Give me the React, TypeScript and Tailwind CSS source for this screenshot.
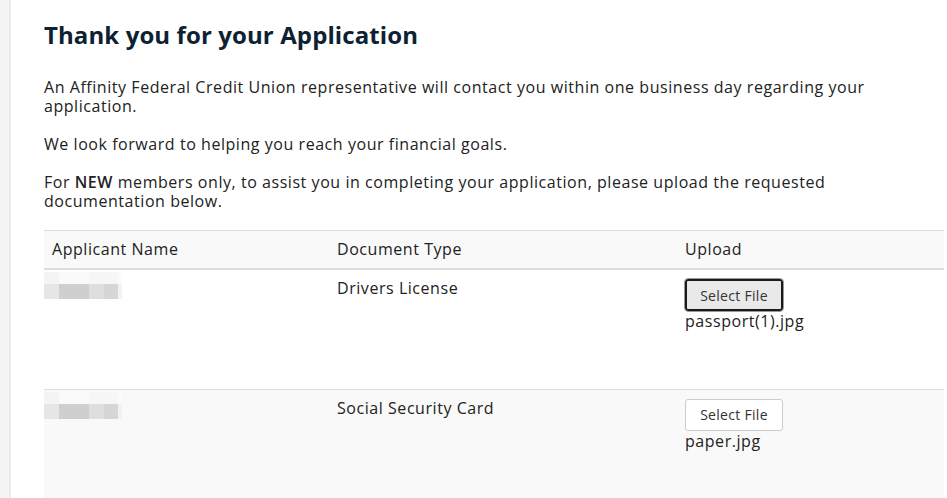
import React from "react";

// pixelated placeholder standing in for the redacted applicant name
function BlurredName() {
  const top = ["#f4f4f4", "#fafafa", "#f6f6f6", "#f7f7f7", "#fbfbfb"];
  const bottom = ["#e6e6e6", "#cfcfcf", "#dedede", "#d6d6d6", "#f2f2f2"];
  const widths = ["w-[15px]", "w-[30px]", "w-[15px]", "w-[14px]", "w-[4px]"];
  return (
    <div className="flex flex-col">
      <div className="flex h-[12px]">
        {top.map((c, i) => (
          <div key={i} className={widths[i]} style={{ background: c }} />
        ))}
      </div>
      <div className="flex h-[15px]">
        {bottom.map((c, i) => (
          <div key={i} className={widths[i]} style={{ background: c }} />
        ))}
      </div>
    </div>
  );
}

const rows = [
  { doc: "Drivers License", file: "passport(1).jpg", focused: true },
  { doc: "Social Security Card", file: "paper.jpg", focused: false },
];

export default function App() {
  return (
    <div
      className="flex min-h-[498px] bg-white text-[#222]"
      style={{ fontFamily: '"Open Sans", "Liberation Sans", sans-serif' }}
    >
      <div className="w-[11px] shrink-0 border-r-2 border-[#ebebeb] bg-[#f4f4f4]" />
      <main className="flex-1 pl-[33px] pr-[3px] pt-[19px]">
        <h1 className="text-[24px] font-bold leading-[32px] tracking-[0.1px] text-[#0c2233]">
          Thank you for your Application
        </h1>
        <div className="mt-[27px] space-y-[19px] text-[16px] leading-[19px] tracking-[0.55px]">
          <p className="pr-[40px]">
            An Affinity Federal Credit Union representative will contact you within one business day
            regarding your application.
          </p>
          <p>We look forward to helping you reach your financial goals.</p>
          <p className="pr-[60px]">
            For <span className="font-semibold">NEW</span> members only, to assist you in completing
            your application, please upload the requested documentation below.
          </p>
        </div>

        <table className="mt-[19px] w-full border-collapse text-left text-[16px] leading-[19px] tracking-[0.55px]">
          <thead>
            <tr className="border-t border-b-2 border-[#dddddd] bg-[#f9f9f9]">
              <th className="w-[285px] px-[8px] py-[9px] font-normal">Applicant Name</th>
              <th className="w-[348px] px-[8px] py-[9px] font-normal">Document Type</th>
              <th className="px-[8px] py-[9px] font-normal">Upload</th>
            </tr>
          </thead>
          <tbody>
            {rows.map((r, i) => (
              <tr
                key={r.doc}
                className={
                  "h-[120px] align-top " +
                  (i % 2 === 1 ? "bg-[#f9f9f9]" : "border-b border-[#dddddd] bg-white")
                }
              >
                <td className="pt-[2px]">
                  <BlurredName />
                </td>
                <td className="px-[8px] pt-[9px]">{r.doc}</td>
                <td className="px-[8px] pt-[9px]">
                  <button
                    className={
                      "h-[32px] w-[98px] rounded-[3px] text-[14px] tracking-[0.3px] text-[#333] " +
                      (r.focused
                        ? "border-2 border-[#1a1a1a] bg-[#e9e9e9] outline outline-1 outline-[#999]"
                        : "border border-[#cccccc] bg-white")
                    }
                  >
                    Select File
                  </button>
                  <div className="mt-[1px]">{r.file}</div>
                </td>
              </tr>
            ))}
          </tbody>
        </table>
      </main>
    </div>
  );
}
